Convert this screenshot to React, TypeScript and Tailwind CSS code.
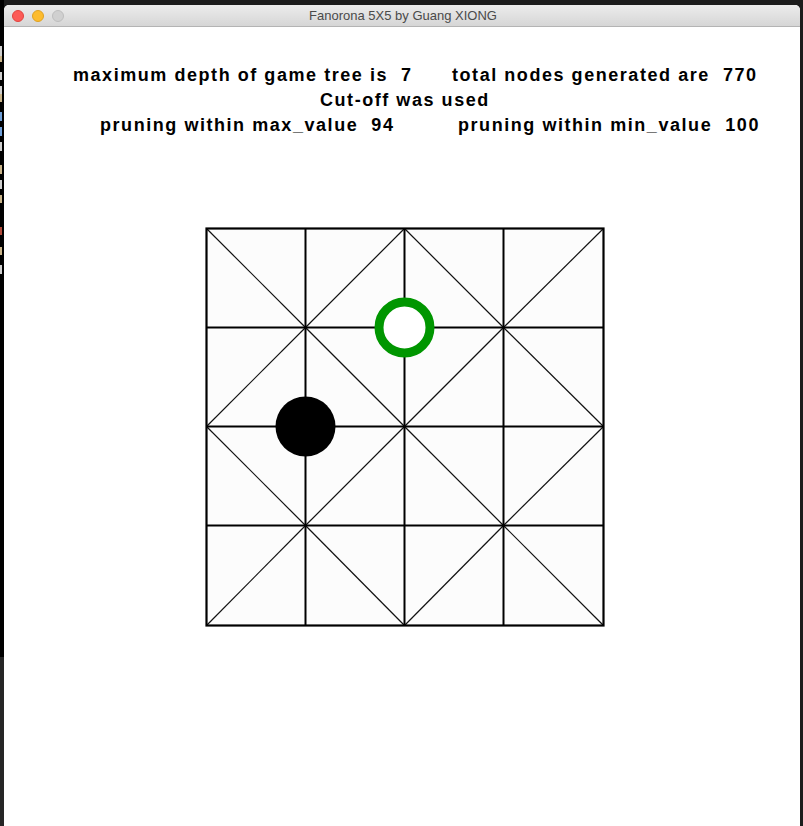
import React from "react";

const GRID = [0, 99, 198, 297, 397];
const OFF = 1.5;

// fragments of the terminal window behind, only the right edge shows
const LEFT_BITS: { h: number; color: string }[] = [
  { h: 10, color: "#cfcfcf" },
  { h: 6, color: "#c9b48a" },
  { h: 10, color: "#000" },
  { h: 8, color: "#cfcfcf" },
  { h: 6, color: "#000" },
  { h: 8, color: "#cfcfcf" },
  { h: 8, color: "#c9b48a" },
  { h: 10, color: "#000" },
  { h: 9, color: "#6f9fd8" },
  { h: 6, color: "#000" },
  { h: 9, color: "#6f9fd8" },
  { h: 6, color: "#000" },
  { h: 9, color: "#cfcfcf" },
  { h: 14, color: "#000" },
  { h: 9, color: "#c9b48a" },
  { h: 6, color: "#000" },
  { h: 9, color: "#cfcfcf" },
  { h: 6, color: "#000" },
  { h: 8, color: "#c9b48a" },
  { h: 24, color: "#000" },
  { h: 8, color: "#b04a3a" },
  { h: 12, color: "#000" },
  { h: 8, color: "#c9b48a" },
  { h: 10, color: "#000" },
  { h: 9, color: "#cfcfcf" },
];

function TrafficLight({ bg, border }: { bg: string; border: string }) {
  return (
    <span
      className="inline-block h-[12px] w-[12px] rounded-full border"
      style={{ backgroundColor: bg, borderColor: border }}
    />
  );
}

function Board() {
  const lines: React.ReactNode[] = [];
  for (let r = 0; r < 4; r++) {
    for (let c = 0; c < 4; c++) {
      const x1 = GRID[c] + OFF;
      const x2 = GRID[c + 1] + OFF;
      const y1 = GRID[r] + OFF;
      const y2 = GRID[r + 1] + OFF;
      const even = (r + c) % 2 === 0;
      lines.push(
        <line
          key={`d${r}${c}`}
          x1={x1}
          y1={even ? y1 : y2}
          x2={x2}
          y2={even ? y2 : y1}
          stroke="#111"
          strokeWidth={1.2}
        />
      );
    }
  }
  return (
    <svg width={401} height={401} viewBox="0 0 401 401" className="block">
      <rect x={OFF} y={OFF} width={397} height={397} fill="#fcfcfc" />
      {lines}
      {GRID.slice(1, 4).map((g) => (
        <g key={`g${g}`}>
          <line x1={g + OFF} y1={OFF} x2={g + OFF} y2={397 + OFF} stroke="#000" strokeWidth={2} />
          <line x1={OFF} y1={g + OFF} x2={397 + OFF} y2={g + OFF} stroke="#000" strokeWidth={2} />
        </g>
      ))}
      <rect x={OFF} y={OFF} width={397} height={397} fill="none" stroke="#000" strokeWidth={2.2} />
      {/* black piece */}
      <circle cx={99 + OFF} cy={198 + OFF} r={30} fill="#000" />
      {/* green ring piece */}
      <circle cx={198 + OFF} cy={99 + OFF} r={25.5} fill="#fff" stroke="#009600" strokeWidth={9} />
    </svg>
  );
}

export default function App() {
  return (
    <div className="flex h-[826px] w-[803px] overflow-hidden bg-[#1c1c1c] font-['Liberation_Sans',Arial,sans-serif]">
      <div className="flex w-[4px] shrink-0 flex-col">
        <div className="flex h-[657px] flex-col bg-black pt-[46px]">
          {LEFT_BITS.map((b, i) => (
            <div key={i} className="w-[2px]" style={{ height: b.h, backgroundColor: b.color }} />
          ))}
        </div>
        <div className="flex-1 bg-[#262626]" />
      </div>

      <div className="mr-[3px] mt-[5px] flex flex-1 flex-col overflow-hidden rounded-t-[5px] bg-white">
        <div className="relative flex h-[22px] shrink-0 items-center border-b border-[#b4b4b4] bg-gradient-to-b from-[#ececec] to-[#d6d6d6] pl-[8px]">
          <div className="flex items-center gap-[8px]">
            <TrafficLight bg="#fc5b57" border="#e0443e" />
            <TrafficLight bg="#fdbc2e" border="#dea123" />
            <TrafficLight bg="#d0d0d0" border="#bdbdbd" />
          </div>
          <div className="flex-1 pr-[58px] text-center text-[13px] leading-none text-[#4a4a4a]">
            Fanorona 5X5 by Guang XIONG
          </div>
        </div>

        <div className="flex flex-1 flex-col bg-white">
          <div className="whitespace-pre pt-[36px] text-[18px] font-bold leading-[25px] tracking-[1.55px] text-black">
            <div className="flex">
              <span className="ml-[69px] w-[379px] shrink-0">maximum depth of game tree is  7</span>
              <span>total nodes generated are  770</span>
            </div>
            <div className="flex">
              <span className="ml-[316px]">Cut-off was used</span>
            </div>
            <div className="flex">
              <span className="ml-[96px] w-[358px] shrink-0">pruning within max_value  94</span>
              <span>pruning within min_value  100</span>
            </div>
          </div>

          <div className="ml-[201px] mt-[89px]">
            <Board />
          </div>
        </div>
      </div>
    </div>
  );
}
